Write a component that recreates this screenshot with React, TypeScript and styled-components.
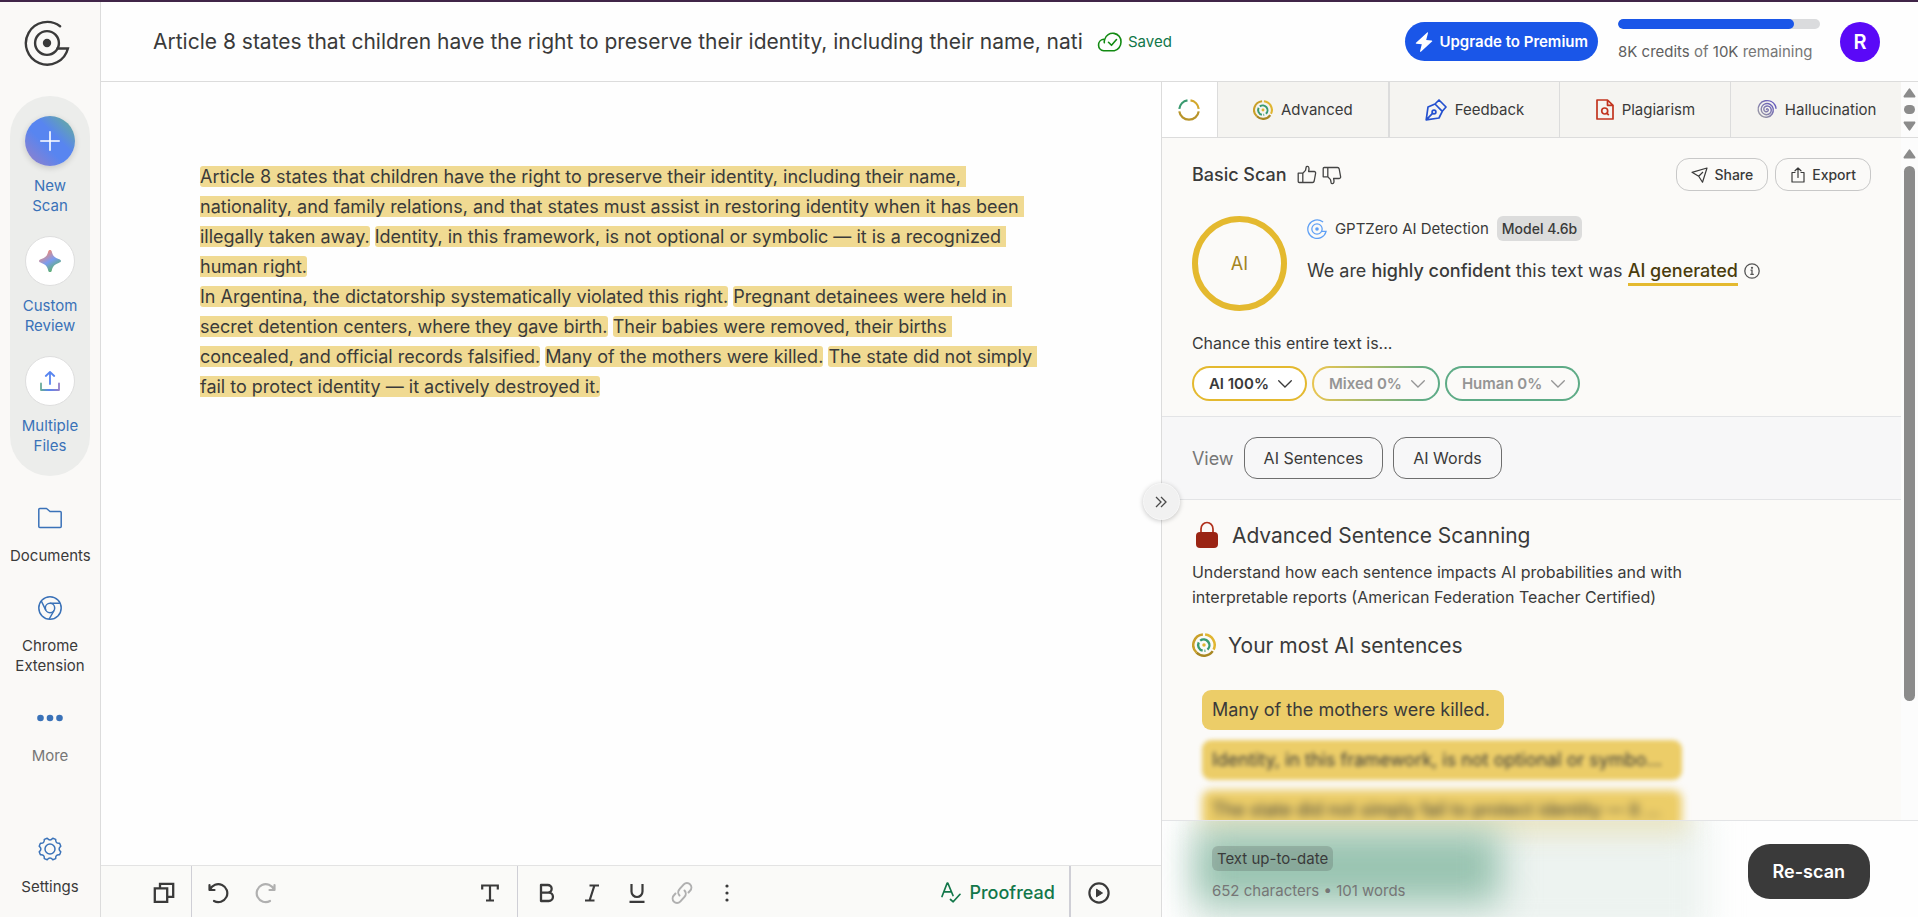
import React, { useState } from "react";
import styled, { createGlobalStyle, css } from "styled-components";

const GlobalStyle = createGlobalStyle`
  *, *::before, *::after { box-sizing: border-box; }
  body {
    margin: 0;
    font-family: Inter, "Liberation Sans", sans-serif;
    color: #3a3a3a;
    background: #fefefe;
  }
  button, input { font: inherit; color: inherit; }
  button { cursor: pointer; padding: 0; border: 0; background: none; }
  a { color: inherit; text-decoration: none; }
  h1, h2, h3, p { margin: 0; font-weight: 400; }
  svg { display: block; flex: none; }
`;

/* ---------- page frame ---------- */

const Page = styled.div`
  display: flex;
  height: 100vh;
  border-top: 2px solid #402548;
`;

const Sidebar = styled.nav`
  flex: none;
  width: 101px;
  display: flex;
  flex-direction: column;
  align-items: center;
  padding: 18px 0 20px 0;
  border-right: 1px solid #dcdcdc;
  background: #faf9f7;
`;

const Workspace = styled.div`
  flex: 1;
  min-width: 0;
  display: flex;
  flex-direction: column;
`;

const Columns = styled.div`
  flex: 1;
  min-height: 0;
  display: grid;
  grid-template-columns: minmax(0, 7fr) minmax(0, 5fr);
  grid-template-rows: minmax(0, 1fr);
`;

/* ---------- sidebar ---------- */

const LogoLink = styled.a`
  margin-right: 6px;
`;

const ActionGroup = styled.div`
  width: 80px;
  margin: 30px 0;
  padding: 20px 0;
  display: flex;
  flex-direction: column;
  gap: 20px;
  border-radius: 40px;
  background: #ecedeb;
`;

const NavItem = styled.button<{ $tone?: string; $gap?: number }>`
  display: flex;
  flex-direction: column;
  align-items: center;
  gap: ${(p) => p.$gap ?? 16}px;
  font-size: 15px;
  line-height: 20px;
  text-align: center;
  color: ${(p) => p.$tone ?? "#3a3a3a"};
`;

const NavList = styled.div`
  flex: 1;
  display: flex;
  flex-direction: column;
  gap: 30px;
`;

const NavLabel = styled.span`
  width: 80px;
`;

const RoundIcon = styled.span<{ $primary?: boolean }>`
  display: grid;
  place-items: center;
  width: 50px;
  height: 50px;
  border-radius: 50%;
  background: ${(p) =>
    p.$primary ? "linear-gradient(45deg, #9a80c4 0%, #5885f0 42%, #5885f0 60%, #68b095 96%)" : "#fff"};
  border: ${(p) => (p.$primary ? "0" : "1px solid #dedede")};
  box-shadow: ${(p) => (p.$primary ? "0 2px 6px rgba(0, 0, 0, 0.16)" : "none")};
`;

/* ---------- header ---------- */

const Header = styled.header`
  flex: none;
  height: 80px;
  display: flex;
  align-items: center;
  padding: 0 38px 0 52px;
  border-bottom: 1px solid #dcdcdc;
  background: #fefefe;
`;

const TitleInput = styled.input`
  width: 932px;
  min-width: 0;
  padding: 0;
  border: 0;
  outline: 0;
  background: none;
  font-size: 21px;
  line-height: 28px;
`;

const Saved = styled.span`
  flex: none;
  display: flex;
  align-items: center;
  gap: 6px;
  margin: 0 auto 0 12px;
  font-size: 15px;
  color: #12774a;
`;

const UpgradeButton = styled.button`
  flex: none;
  display: flex;
  align-items: center;
  gap: 6px;
  height: 39px;
  padding: 0 10px;
  border-radius: 20px;
  background: #1a56e8;
  color: #fff;
  font-size: 15px;
  font-weight: 600;
`;

const Credits = styled.div`
  flex: none;
  width: 202px;
  margin: 0 20px;
  padding-bottom: 4px;
  font-size: 15px;
  line-height: 18px;
  color: #767676;
  white-space: nowrap;
`;

const Track = styled.div`
  height: 10px;
  margin-bottom: 14px;
  border-radius: 5px;
  background: #dadbdd;
  overflow: hidden;
`;

const Fill = styled.div`
  height: 100%;
  border-radius: 5px;
  background: #1a56e8;
`;

const Dark = styled.span`
  color: #606060;
`;

const Avatar = styled.button`
  flex: none;
  width: 40px;
  height: 40px;
  border-radius: 50%;
  background: #5a09f7;
  color: #fff;
  font-size: 20px;
  font-weight: 600;
`;

/* ---------- editor ---------- */

const Editor = styled.main`
  display: flex;
  flex-direction: column;
  background: #fefefe;
`;

const Document = styled.div`
  flex: 1;
  padding: 80px 123px 80px 99px;
  font-size: 18px;
  line-height: 30px;
  white-space: pre-wrap;
`;

const Mark = styled.mark`
  border-radius: 3px;
  color: inherit;
  background: #f0da92;
`;

const Toolbar = styled.div`
  flex: none;
  height: 52px;
  display: flex;
  align-items: stretch;
  border-top: 1px solid #e3e3e3;
  background: #fafaf8;
`;

const ToolGroup = styled.div<{ $pad: string; $gap?: number; $width?: string; $line?: number }>`
  display: flex;
  align-items: center;
  flex: ${(p) => (p.$width ? `0 0 ${p.$width}` : "none")};
  gap: ${(p) => p.$gap ?? 0}px;
  padding: ${(p) => p.$pad};
  border-right: ${(p) => p.$line ?? 0}px solid #cfcfd6;
`;

const FormatGroup = styled(ToolGroup)`
  flex: 1;
`;

const Tool = styled.button<{ $muted?: boolean; $end?: boolean }>`
  width: 24px;
  height: 24px;
  display: grid;
  place-items: center;
  color: ${(p) => (p.$muted ? "#b0b0b0" : "#3a3a3a")};
  ${(p) => p.$end && "margin-left: auto;"}
`;

const Proofread = styled.button`
  display: flex;
  align-items: center;
  gap: 8px;
  margin-left: auto;
  font-size: 18px;
  font-weight: 500;
  color: #12774a;
`;

/* ---------- results panel ---------- */

const Panel = styled.aside`
  position: relative;
  display: flex;
  flex-direction: column;
  border-left: 1px solid #dcdcdc;
  background: #fbfaf8;
`;

const Collapse = styled.button`
  position: absolute;
  z-index: 3;
  left: -19px;
  top: 401px;
  width: 37px;
  height: 37px;
  display: grid;
  place-items: center;
  border-radius: 50%;
  background: #f1f1f1;
  border: 1px solid #f8f8f8;
  box-shadow: 0 1px 5px rgba(0, 0, 0, 0.22);
`;

const TabBar = styled.div`
  flex: none;
  display: flex;
  height: 56px;
  border-bottom: 1px solid #dcdcdc;
`;

const Tabs = styled.div`
  flex: 1;
  min-width: 0;
  display: flex;
`;

const Tab = styled.button<{ $active?: boolean; $line?: number }>`
  display: flex;
  align-items: center;
  justify-content: center;
  gap: 8px;
  font-size: 15px;
  border-right: ${(p) => p.$line ?? 1}px solid #dcdcdc;
  background: ${(p) => (p.$active ? "#fff" : "#f5f4f1")};
  ${(p) => (p.$active ? css`flex: none; width: 56px;` : css`flex: 1; min-width: 0;`)}
`;

const ScrollRail = styled.div<{ $pad: number }>`
  flex: none;
  width: 17px;
  display: flex;
  flex-direction: column;
  align-items: center;
  gap: 7px;
  padding: ${(p) => p.$pad}px 0;
  background: #fcfcfc;
  color: #8b8b8b;
`;

const Thumb = styled.div<{ $height: string }>`
  width: 11px;
  height: ${(p) => p.$height};
  border-radius: 6px;
  background: #8b8b8b;
`;

const PanelBody = styled.div`
  flex: 1;
  min-height: 0;
  display: flex;
`;

const Results = styled.div`
  flex: 1;
  min-width: 0;
  overflow: hidden;
`;

const Summary = styled.section`
  padding: 20px 30px 15px;
`;

const Row = styled.div<{ $gap: number }>`
  display: flex;
  align-items: center;
  gap: ${(p) => p.$gap}px;
`;

const SummaryHead = styled(Row)`
  margin-bottom: 25px;
`;

const ScanTitle = styled.h2`
  margin-right: 5px;
  font-size: 18px;
  font-weight: 500;
  line-height: 24px;
`;

const OutlineButton = styled.button`
  display: flex;
  align-items: center;
  gap: 6px;
  height: 33px;
  padding: 0 14px;
  border: 1px solid #c8c8c8;
  border-radius: 13px;
  font-size: 14px;
  font-weight: 500;
`;

const Push = styled.div`
  display: flex;
  gap: 7px;
  margin-left: auto;
`;

const Verdict = styled.div`
  display: flex;
  gap: 20px;
  margin-bottom: 22px;
`;

const Gauge = styled.div`
  flex: none;
  display: grid;
  place-items: center;
  width: 95px;
  height: 95px;
  border: 6px solid #e4b92f;
  border-radius: 50%;
  font-size: 18px;
  color: #a48421;
`;

const Detector = styled(Row)`
  height: 25px;
  margin-bottom: 16px;
  font-size: 15px;
`;

const Badge = styled.span<{ $glass?: boolean }>`
  display: inline-block;
  padding: 0 5px;
  border-radius: 6px;
  font-size: ${(p) => (p.$glass ? 15 : 14)}px;
  line-height: 25px;
  font-weight: ${(p) => (p.$glass ? 400 : 500)};
  background: ${(p) => (p.$glass ? "rgba(58, 58, 58, 0.2)" : "#dcdcdc")};
`;

const Statement = styled.p`
  display: flex;
  align-items: center;
  font-size: 18px;
  line-height: 28px;
  white-space: pre-wrap;
  b { font-weight: 500; }
`;

const Underlined = styled.b`
  color: #4a3c0c;
  box-shadow: 0 3px #e4b92f;
  line-height: 24px;
  margin-right: 6px;
`;

const Caption = styled.p`
  margin-bottom: 13px;
  font-size: 16px;
  line-height: 20px;
`;

const pillBackground = {
  ai: "linear-gradient(#fff, #fff) padding-box, linear-gradient(#e4b92f, #e4b92f) border-box",
  mixed: "linear-gradient(#fbfaf8, #fbfaf8) padding-box, linear-gradient(100deg, #e7c552 5%, #5eab86 90%) border-box",
  human: "linear-gradient(#fbfaf8, #fbfaf8) padding-box, linear-gradient(#5eab86, #5eab86) border-box",
};

const Pill = styled.button<{ $kind: keyof typeof pillBackground }>`
  display: flex;
  align-items: center;
  gap: 9px;
  height: 35px;
  padding: 0 13px 0 15px;
  border: 2px solid transparent;
  border-radius: 18px;
  background: ${(p) => pillBackground[p.$kind]};
  font-size: 15px;
  font-weight: 600;
  color: ${(p) => (p.$kind === "ai" ? "#3a3a3a" : "#959595")};
`;

const ViewBar = styled.section`
  display: flex;
  align-items: center;
  gap: 10px;
  height: 84px;
  padding: 0 30px;
  border: solid #e3e4e6;
  border-width: 1px 0;
  background: #f7f7f8;
`;

const ViewLabel = styled.span`
  font-size: 18px;
  color: #767676;
`;

const ViewButton = styled.button`
  height: 42px;
  padding: 0 19px;
  border: 1px solid #6e6e6e;
  border-radius: 13px;
  font-size: 16px;
`;

const Sentences = styled.section`
  padding: 20px 30px 0;
`;

const SectionTitle = styled.h3`
  display: flex;
  align-items: center;
  gap: 12px;
  height: 30px;
  font-size: 21px;
`;

const Blurb = styled.p`
  max-width: 520px;
  margin: 10px 0 20px;
  font-size: 16px;
  line-height: 25px;
`;

const ChipList = styled.ul`
  display: flex;
  flex-direction: column;
  align-items: flex-start;
  gap: 10px;
  margin: 30px 0 0;
  padding: 0 10px;
  list-style: none;
`;

const Chip = styled.li<{ $blur?: number }>`
  width: ${(p) => (p.$blur ? "480px" : "auto")};
  max-width: 100%;
  padding: 0 14px 0 10px;
  border-radius: 9px;
  background: #eccd68;
  filter: ${(p) => (p.$blur ? `blur(${p.$blur}px)` : "none")};
`;

const ChipText = styled.span`
  display: block;
  font-size: 18px;
  line-height: 40px;
  white-space: nowrap;
  overflow: hidden;
  text-overflow: ellipsis;
`;

const PanelFooter = styled.footer`
  position: relative;
  flex: none;
  display: flex;
  align-items: center;
  height: 97px;
  padding: 5px 48px 0 50px;
  border-top: 1px solid #e3e4e6;
  background: #fefefe;
  overflow: hidden;
`;

const Glow = styled.span<{ $box: string; $color: string; $blur: number }>`
  position: absolute;
  inset: ${(p) => p.$box};
  background: ${(p) => p.$color};
  filter: blur(${(p) => p.$blur}px);
`;

const Stats = styled.div`
  position: relative;
  padding-top: 4px;
  font-size: 15px;
  line-height: 20px;
  color: #767676;
  ${Badge} { margin-bottom: 10px; color: #3a3a3a; }
`;

const Rescan = styled.button`
  position: relative;
  height: 55px;
  margin-left: auto;
  padding: 0 25px;
  border-radius: 22px;
  background: #3a3a3a;
  color: #fff;
  font-size: 18px;
  font-weight: 600;
`;

/* ---------- drawings ---------- */

const Logo = ({ size, color, width = 2 }: { size: number; color: string; width?: number }) => (
  <svg width={size} height={size} viewBox="0 0 44 44" fill="none" stroke={color} strokeWidth={width}>
    <path d="M34.500 6A20.400 20.400 0 1 0 42 27.200H32" strokeLinecap="round" />
    <circle cx="22" cy="22" r="11.400" />
    <circle cx="22" cy="22" r="4" fill={color} stroke="none" />
  </svg>
);

const ThumbUp = () => (
  <svg width="20" height="20" viewBox="0 0 20 20" fill="none" stroke="#444" strokeWidth="1.300" strokeLinejoin="round">
    <path d="M1.200 8.200h4.600v9.300H2.200a1 1 0 0 1-1-1ZM5.800 8.200 8.500 5.400 9.200 2c.3-.9 2.300-.7 2.600.4.4 1.300.2 2.600-.2 4.100h5.600c1 0 1.600.8 1.400 1.800l-1.400 7.700c-.2.9-.8 1.500-1.700 1.500H5.800" />
  </svg>
);

const ThumbDown = () => (
  <svg width="20" height="20" viewBox="0 0 20 20" fill="none" stroke="#444" strokeWidth="1.300" strokeLinejoin="round">
    <path d="M1.200 11.800h4.600V2.500H2.200a1 1 0 0 0-1 1ZM5.800 11.800l2.700 2.800.7 3.400c.3.9 2.300.7 2.600-.4.4-1.300.2-2.600-.2-4.100h5.600c1 0 1.600-.8 1.400-1.800L17.200 4c-.2-.9-.8-1.500-1.700-1.500H5.800" />
  </svg>
);

const Chevron = () => (
  <svg width="14" height="8" viewBox="0 0 14 8" fill="none" stroke="currentColor" strokeWidth="1.300" strokeLinecap="round">
    <path d="M.7.7 7 7 13.300.7" />
  </svg>
);

const Arrow = ({ down }: { down?: boolean }) => (
  <svg width="13" height="10" viewBox="0 0 13 10" fill="currentColor">
    <path
      d={
        down
          ? "M1.600.5h9.800c.9 0 1.300 1 .8 1.700L7.400 9a1.100 1.100 0 0 1-1.800 0L.8 2.200C.3 1.500.7.5 1.600.5Z"
          : "M1.600 9.500h9.800c.9 0 1.300-1 .8-1.700L7.400 1a1.100 1.100 0 0 0-1.800 0L.8 7.800c-.5.7-.1 1.700.8 1.700Z"
      }
    />
  </svg>
);

const Ring = () => (
  <svg width="22" height="22" viewBox="0 0 22 22" fill="none" strokeWidth="2.200">
    <path d="M1.300 9.800A9.800 9.800 0 0 1 9.500 1.300" stroke="#3a9a70" />
    <path d="M12.500 1.300A9.800 9.800 0 0 1 20.700 9.800" stroke="#d3a82c" />
    <path d="M20.700 12.300A9.800 9.800 0 0 1 1.300 12.300" stroke="#b8942a" />
  </svg>
);

const AdvancedIcon = ({ size = 20 }: { size?: number }) => (
  <svg width={size} height={size} viewBox="0 0 22 22" fill="none">
    <path d="M12 1.300A9.700 9.700 0 0 1 19.800 15.200" stroke="#e0b531" strokeWidth="2.300" />
    <path d="M19 16.600A9.700 9.700 0 0 1 4.200 18" stroke="#a88723" strokeWidth="2.300" />
    <path d="M4.200 18A9.700 9.700 0 0 1 10 1.300" stroke="#c9a02a" strokeWidth="2.300" />
    <path d="M7.500 7A5.300 5.300 0 0 1 14.200 15.200" stroke="#3a9a70" strokeWidth="2.200" />
    <path d="M12.300 16.200A5.300 5.300 0 0 1 11.400 16.300M9.800 16.200A5.300 5.300 0 0 1 6.200 8.600" stroke="#3a9a70" strokeWidth="2.200" />
    <circle cx="11" cy="11" r="1.600" fill="#e0b531" />
  </svg>
);

const SpiralIcon = () => (
  <svg width="21" height="21" viewBox="0 0 22 22" fill="none" strokeWidth="1.500" strokeLinecap="round">
    <defs>
      <linearGradient id="spiral" x1="1" y1="0" x2="0" y2="1">
        <stop offset="0" stopColor="#5b4fc0" />
        <stop offset="1" stopColor="#a0a0a0" />
      </linearGradient>
    </defs>
    <path
      stroke="url(#spiral)"
      d="M11 11c.2-1.200 1.900-.9 1.900.6 0 1.600-2 2.300-3.400 1.400-1.700-1-1.700-3.500-.2-4.800 2-1.600 5-.9 6.200 1.300 1.200 2.500.1 5.500-2.400 6.500-3 1.200-6.300-.3-7.300-3.300C4.700 9.300 6.600 5.800 10 4.900c3.700-.8 7.300 1.500 8 5.200.7 4-1.800 8-5.800 8.800C7.600 19.900 3.200 17 2.400 12.500 1.400 7.500 4.700 2.800 9.600 1.900c4-.7 8.400 1 10.300 4.600.6 1.100.9 2.200 1 3.200"
    />
  </svg>
);

/* ---------- content ---------- */

const documentTitle =
  "Article 8 states that children have the right to preserve their identity, including their name, nati";

const paragraphs = [
  [
    "Article 8 states that children have the right to preserve their identity, including their name, nationality, and family relations, and that states must assist in restoring identity when it has been illegally taken away.",
    "Identity, in this framework, is not optional or symbolic — it is a recognized human right.",
  ],
  [
    "In Argentina, the dictatorship systematically violated this right.",
    "Pregnant detainees were held in secret detention centers, where they gave birth.",
    "Their babies were removed, their births concealed, and official records falsified.",
    "Many of the mothers were killed.",
    "The state did not simply fail to protect identity — it actively destroyed it.",
  ],
];

const topSentences = [
  { text: "Many of the mothers were killed.", blur: 0 },
  { text: "Identity, in this framework, is not optional or symbo...", blur: 2 },
  { text: "The state did not simply fail to protect identity — it ...", blur: 4 },
];

const creditsUsed = 87;

export default function App() {
  const [title, setTitle] = useState(documentTitle);
  return (
    <>
      <GlobalStyle />
      <Page>
        <Sidebar>
          <LogoLink href="#" aria-label="Home">
            <Logo size={46} color="#3a3a3a" width={2.3} />
          </LogoLink>
          <ActionGroup>
            <NavItem $tone="#3a72b8" $gap={10}>
              <RoundIcon $primary>
                <svg width="20" height="20" viewBox="0 0 20 20" stroke="#fff" strokeWidth="1.600" strokeLinecap="round">
                  <path d="M10 .8v18.400M.8 10h18.400" />
                </svg>
              </RoundIcon>
              <NavLabel>New<br />Scan</NavLabel>
            </NavItem>
            <NavItem $tone="#3a72b8" $gap={10}>
              <RoundIcon>
                <svg width="22" height="22" viewBox="0 0 22 22">
                  <defs>
                    <linearGradient id="spark" x1="0.200" y1="0" x2="0.800" y2="1">
                      <stop offset=".1" stopColor="#f08a78" />
                      <stop offset=".5" stopColor="#7b9cf0" />
                      <stop offset=".85" stopColor="#5fae7c" />
                    </linearGradient>
                  </defs>
                  <path
                    fill="url(#spark)"
                    d="M11 0c1 0 1.500.6 1.800 1.600.7 3.300 1.800 5.600 6.800 7.500 1 .4 2.400.9 2.400 1.900s-1.400 1.500-2.400 1.900c-5 1.900-6.100 4.200-6.800 7.500-.3 1-.8 1.600-1.800 1.600s-1.500-.6-1.800-1.600c-.7-3.300-1.800-5.600-6.800-7.500C1.400 12.500 0 12 0 11s1.400-1.500 2.400-1.900c5-1.900 6.100-4.200 6.800-7.500C9.500.6 10 0 11 0Z"
                  />
                </svg>
              </RoundIcon>
              <NavLabel>Custom<br />Review</NavLabel>
            </NavItem>
            <NavItem $tone="#3a72b8" $gap={10}>
              <RoundIcon>
                <svg width="20" height="20" viewBox="0 0 20 20" fill="none" strokeWidth="1.800" strokeLinecap="round" strokeLinejoin="round">
                  <defs>
                    <linearGradient id="tray" gradientUnits="userSpaceOnUse" x1="0" y1="0" x2="20" y2="0">
                      <stop offset="0" stopColor="#6bb08f" />
                      <stop offset=".45" stopColor="#5885f0" />
                      <stop offset="1" stopColor="#9a80c4" />
                    </linearGradient>
                  </defs>
                  <path stroke="#5885f0" d="M10 13V1.200M5.800 5 10 1l4.200 4" />
                  <path stroke="url(#tray)" d="M1 12.500V19h18v-6.500" />
                </svg>
              </RoundIcon>
              <NavLabel>Multiple<br />Files</NavLabel>
            </NavItem>
          </ActionGroup>
          <NavList>
            <NavItem>
              <svg width="24" height="24" viewBox="0 0 24 24" fill="none" stroke="#3a72b8" strokeWidth="1.500" strokeLinejoin="round">
                <path d="M.8 20.500v-17a1 1 0 0 1 1-1h6.700l3.500 3h10.200a1 1 0 0 1 1 1v14a1 1 0 0 1-1 1H1.800a1 1 0 0 1-1-1Z" />
              </svg>
              <NavLabel>Documents</NavLabel>
            </NavItem>
            <NavItem>
              <svg width="24" height="24" viewBox="0 0 24 24" fill="none" stroke="#3a72b8" strokeWidth="1.500">
                <circle cx="12" cy="12" r="11.200" />
                <circle cx="12" cy="12" r="4.700" />
                <path d="M12 7.300h9.900M3.300 5l4.600 9.300M16.100 14.300 11.200 23" />
              </svg>
              <NavLabel>Chrome Extension</NavLabel>
            </NavItem>
            <NavItem $tone="#767676">
              <svg width="26" height="24" viewBox="0 0 26 24" fill="#3a72b8">
                <circle cx="3.500" cy="12" r="3.300" />
                <circle cx="13" cy="12" r="3.300" />
                <circle cx="22.500" cy="12" r="3.300" />
              </svg>
              <NavLabel>More</NavLabel>
            </NavItem>
          </NavList>
          <NavItem>
            <svg width="24" height="24" viewBox="0 0 24 24" fill="none" stroke="#3a72b8" strokeWidth="1.500" strokeLinejoin="round">
              <circle cx="12" cy="12" r="5" />
              <path d="M9.200 1.200Q12 4.600 14.800 1.200L17.700 2.400Q17.300 6.700 21.600 6.300L22.800 9.200Q19.400 12 22.800 14.800L21.600 17.700Q17.300 17.300 17.700 21.600L14.800 22.800Q12 19.400 9.200 22.800L6.300 21.600Q6.700 17.300 2.400 17.700L1.200 14.800Q4.600 12 1.200 9.200L2.400 6.300Q6.700 6.700 6.300 2.400Z" />
            </svg>
            <NavLabel>Settings</NavLabel>
          </NavItem>
        </Sidebar>

        <Workspace>
          <Header>
            <TitleInput aria-label="Document title" value={title} onChange={(e) => setTitle(e.target.value)} />
            <Saved>
              <svg width="25" height="20" viewBox="0 0 25 20" fill="none" stroke="#128a12" strokeWidth="1.600" strokeLinecap="round" strokeLinejoin="round">
                <path d="M6.500 7.300A5.800 5.800 0 0 0 6.700 18.800h10.600A7.700 9 0 0 0 24 10 8.300 8.300 0 0 0 7.700 7.400c-.5 1.300-.6 2.300-.4 3.200" />
                <path d="m11.500 10.300 3 3 5-5.800" />
              </svg>
              Saved
            </Saved>
            <UpgradeButton>
              <svg width="18" height="20" viewBox="0 0 18 20" fill="#fff">
                <path d="M12.200.5 1 10.700a.6.6 0 0 0 .3 1.100l5.500.4L5 19.200c-.1.500.5.800.9.500L17 9.600a.6.600 0 0 0-.3-1.100l-5.500-.4L13 1C13.200.4 12.600 0 12.200.5Z" />
              </svg>
              Upgrade to Premium
            </UpgradeButton>
            <Credits>
              <Track><Fill style={{ width: `${creditsUsed}%` }} /></Track>
              <Dark>8K credits</Dark> of <Dark>10K</Dark> remaining
            </Credits>
            <Avatar aria-label="Account">R</Avatar>
          </Header>

          <Columns>
            <Editor>
              <Document>
                {paragraphs.map((sentences, i) => (
                  <p key={i}>
                    {sentences.map((s, j) => (
                      <React.Fragment key={j}>{j > 0 && " "}<Mark>{s}</Mark></React.Fragment>
                    ))}
                  </p>
                ))}
              </Document>
              <Toolbar>
                <ToolGroup $pad="2px 15px 0 51px" $line={1}>
                  <Tool aria-label="Copy">
                    <svg width="22" height="22" viewBox="0 0 22 22" fill="none" stroke="currentColor" strokeWidth="2.300">
                      <path d="M1.800 6.300h12.400v13.500H1.800ZM7 6V1.800h13.200v13h-6" />
                    </svg>
                  </Tool>
                </ToolGroup>
                <ToolGroup $pad="2px 15px 0" $gap={22} $line={1} $width="326px">
                  <Tool aria-label="Undo">
                    <svg width="22" height="22" viewBox="0 0 22 22" fill="none" stroke="currentColor" strokeWidth="2.200" strokeLinecap="round" strokeLinejoin="round">
                      <path d="M1.500 3v5h5M2 7.600A9 9 0 1 1 6 19" />
                    </svg>
                  </Tool>
                  <Tool aria-label="Redo" $muted>
                    <svg width="22" height="22" viewBox="0 0 22 22" fill="none" stroke="currentColor" strokeWidth="2.200" strokeLinecap="round" strokeLinejoin="round">
                      <path d="M20.500 3v5h-5M20 7.600A9 9 0 1 0 16 19" />
                    </svg>
                  </Tool>
                  <Tool aria-label="Text style" $end>
                    <svg width="18" height="18" viewBox="0 0 18 18" fill="none" stroke="currentColor" strokeWidth="2.200">
                      <path d="M1.200 5.500V1.500h15.600v4M9 1.500v15M5 16.500h8" />
                    </svg>
                  </Tool>
                </ToolGroup>
                <FormatGroup $pad="2px 14px 0 17px" $gap={21} $line={2}>
                  <Tool aria-label="Bold">
                    <svg width="16" height="20" viewBox="0 0 16 20" fill="none" stroke="currentColor" strokeWidth="2.300" strokeLinejoin="round">
                      <path d="M2 2h6.800a3.800 3.800 0 0 1 0 7.700H2ZM2 9.700h7.800a4.100 4.100 0 0 1 0 8.300H2Z" />
                    </svg>
                  </Tool>
                  <Tool aria-label="Italic">
                    <svg width="16" height="18" viewBox="0 0 16 18" fill="none" stroke="currentColor" strokeWidth="2.200">
                      <path d="M5.500 1.500H15M1 16.500h9.500M10.400 1.500l-4.800 15" />
                    </svg>
                  </Tool>
                  <Tool aria-label="Underline">
                    <svg width="16" height="20" viewBox="0 0 16 20" fill="none" stroke="currentColor" strokeWidth="2.200">
                      <path d="M2.500 1v7.500a5.500 5.500 0 0 0 11 0V1M.5 18.900h15" />
                    </svg>
                  </Tool>
                  <Tool aria-label="Link" $muted>
                    <svg width="24" height="24" viewBox="0 0 24 24" fill="none" stroke="currentColor" strokeWidth="2" strokeLinecap="round" strokeLinejoin="round">
                      <path d="M9.500 14.500a4.600 4.600 0 0 1 0-6.300l4.300-4.800a4.300 4.300 0 0 1 6.300 0 4.600 4.600 0 0 1 0 6.300l-1.600 1.800" />
                      <path d="M14.500 9.500a4.600 4.600 0 0 1 0 6.300l-4.300 4.800a4.300 4.300 0 0 1-6.300 0 4.600 4.600 0 0 1 0-6.300l1.600-1.800" />
                    </svg>
                  </Tool>
                  <Tool aria-label="More formatting">
                    <svg width="4" height="18" viewBox="0 0 4 18" fill="currentColor">
                      <circle cx="2" cy="2" r="1.600" />
                      <circle cx="2" cy="9" r="1.600" />
                      <circle cx="2" cy="16" r="1.600" />
                    </svg>
                  </Tool>
                  <Proofread>
                    <svg width="20" height="21" viewBox="0 0 20 21" fill="none" stroke="currentColor" strokeWidth="1.700" strokeLinecap="round" strokeLinejoin="round">
                      <path d="M1 14.500 6.200 1h.6L12 13.500M3 9.800h7.200M9.500 17.500l2.700 2.300 6.800-7.500" />
                    </svg>
                    Proofread
                  </Proofread>
                </FormatGroup>
                <ToolGroup $pad="2px 50px 0 16px">
                  <Tool aria-label="Play">
                    <svg width="22" height="22" viewBox="0 0 22 22" fill="none" stroke="currentColor" strokeWidth="2.200">
                      <circle cx="11" cy="11" r="9.600" />
                      <path d="M8.500 7.200v7.600l6-3.800Z" fill="currentColor" strokeWidth="1" strokeLinejoin="round" />
                    </svg>
                  </Tool>
                </ToolGroup>
              </Toolbar>
            </Editor>

            <Panel>
              <Collapse aria-label="Collapse panel">
                <svg width="12" height="12" viewBox="0 0 12 12" fill="none" stroke="#4a4a4a" strokeWidth="1.300">
                  <path d="m1 1 5 5-5 5M6 1l5 5-5 5" />
                </svg>
              </Collapse>
              <TabBar>
                <Tabs>
                  <Tab $active aria-label="Basic scan"><Ring /></Tab>
                  <Tab $line={2}><AdvancedIcon />Advanced</Tab>
                  <Tab>
                    <svg width="22" height="22" viewBox="0 0 22 22" fill="none" stroke="#2450cf" strokeWidth="1.700" strokeLinejoin="round">
                      <path d="M1.200 20.800 3 8l7-3 7.300 7.300L14 19ZM1.200 20.800l6.600-6.600M10 5l4-4 7 7-3.700 4.300" />
                      <circle cx="9" cy="13" r="1.900" />
                    </svg>
                    Feedback
                  </Tab>
                  <Tab>
                    <svg width="18" height="21" viewBox="0 0 18 21" fill="none" stroke="#c2341f" strokeWidth="1.700" strokeLinejoin="round">
                      <path d="M1 1h10.500L17 6.300V20H1ZM11.500 1v5.300H17" />
                      <circle cx="8.700" cy="12" r="3" />
                      <path d="m10.800 14.200 2 2" />
                    </svg>
                    Plagiarism
                  </Tab>
                  <Tab $line={0}><SpiralIcon />Hallucination</Tab>
                </Tabs>
                <ScrollRail $pad={6}><Arrow /><Thumb $height="9px" /><Arrow down /></ScrollRail>
              </TabBar>

              <PanelBody>
                <Results>
                  <Summary>
                    <SummaryHead $gap={5}>
                      <ScanTitle>Basic Scan</ScanTitle>
                      <button aria-label="Good result"><ThumbUp /></button>
                      <button aria-label="Bad result"><ThumbDown /></button>
                      <Push>
                        <OutlineButton>
                          <svg width="17" height="16" viewBox="0 0 17 16" fill="none" stroke="currentColor" strokeWidth="1.200" strokeLinejoin="round">
                            <path d="M1 5.300 16 1l-4.500 14.200-3.800-6ZM7.700 9.200 12 5" />
                          </svg>
                          Share
                        </OutlineButton>
                        <OutlineButton>
                          <svg width="16" height="16" viewBox="0 0 16 16" fill="none" stroke="currentColor" strokeWidth="1.200" strokeLinecap="round" strokeLinejoin="round">
                            <path d="M5 5.500H2V15h12V5.500h-3M8 10.500V1M5 3.800 8 1l3 2.800" />
                          </svg>
                          Export
                        </OutlineButton>
                      </Push>
                    </SummaryHead>
                    <Verdict>
                      <Gauge>AI</Gauge>
                      <div>
                        <Detector $gap={8}>
                          <Logo size={20} color="#5fa0f5" width={2.8} />
                          GPTZero AI Detection
                          <Badge>Model 4.6b</Badge>
                        </Detector>
                        <Statement>
                          <span>We are <b>highly confident</b> this text was </span>
                          <Underlined>AI generated</Underlined>
                          <svg width="16" height="16" viewBox="0 0 16 16" fill="none" stroke="#555" strokeWidth="1.300">
                            <circle cx="8" cy="8" r="7.200" />
                            <path d="M6.500 7.200H8v4M6.300 11.400h3.500" />
                            <circle cx="8" cy="4.800" r=".5" />
                          </svg>
                        </Statement>
                      </div>
                    </Verdict>
                    <Caption>Chance this entire text is...</Caption>
                    <Row $gap={5}>
                      <Pill $kind="ai">AI 100% <Chevron /></Pill>
                      <Pill $kind="mixed">Mixed 0% <Chevron /></Pill>
                      <Pill $kind="human">Human 0% <Chevron /></Pill>
                    </Row>
                  </Summary>
                  <ViewBar>
                    <ViewLabel>View</ViewLabel>
                    <ViewButton>AI Sentences</ViewButton>
                    <ViewButton>AI Words</ViewButton>
                  </ViewBar>
                  <Sentences>
                    <SectionTitle>
                      <svg width="28" height="28" viewBox="0 0 28 28">
                        <path d="M9 13V8a6 6.500 0 0 1 12 0v5" fill="none" stroke="#b0301c" strokeWidth="1.700" />
                        <rect x="4" y="11" width="22" height="16" rx="4" fill="#9a2414" />
                      </svg>
                      Advanced Sentence Scanning
                    </SectionTitle>
                    <Blurb>
                      Understand how each sentence impacts AI probabilities and with interpretable reports (American
                      Federation Teacher Certified)
                    </Blurb>
                    <SectionTitle><AdvancedIcon size={24} />Your most AI sentences</SectionTitle>
                    <ChipList>
                      {topSentences.map((s) => (
                        <Chip key={s.text} $blur={s.blur}><ChipText>{s.text}</ChipText></Chip>
                      ))}
                    </ChipList>
                  </Sentences>
                </Results>
                <ScrollRail $pad={11}><Arrow /><Thumb $height="81%" /></ScrollRail>
              </PanelBody>

              <PanelFooter>
                <Glow $box="-10px 210px -20px 30px" $color="#edf3f0" $blur={16} />
                <Glow $box="-24px 230px 82px 40px" $color="#e8e4c4" $blur={12} />
                <Glow $box="10px 418px 14px 34px" $color="#98c3b0" $blur={18} />
                <Stats>
                  <Badge $glass>Text up-to-date</Badge>
                  <div>652 characters • 101 words</div>
                </Stats>
                <Rescan>Re-scan</Rescan>
              </PanelFooter>
            </Panel>
          </Columns>
        </Workspace>
      </Page>
    </>
  );
}
